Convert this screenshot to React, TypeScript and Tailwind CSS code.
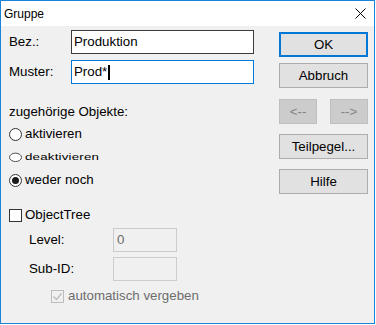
import React from 'react';

const font = { fontFamily: '"Liberation Sans", Arial, sans-serif' };

const Btn: React.FC<{ label: string; className?: string; def?: boolean; disabled?: boolean }> = ({ label, className = '', def, disabled }) => (
    <div
        className={
            'flex items-center justify-center h-[25px] text-[13.3px] leading-none ' +
            (def
                ? 'border-2 border-[#0078d7] bg-[#e1e1e1] text-black '
                : disabled
                ? 'border border-[#bfbfbf] bg-[#cccccc] text-[#838383] '
                : 'border border-[#adadad] bg-[#e1e1e1] text-black ') +
            className
        }
    >
        {label}
    </div>
);

const Radio: React.FC<{ checked?: boolean }> = ({ checked }) => (
    <span className="w-[13px] h-[13px] rounded-full border border-[#333333] bg-white flex items-center justify-center shrink-0">
        {checked && <span className="w-[7px] h-[7px] rounded-full bg-[#1a1a1a]" />}
    </span>
);

export default function App() {
    return (
        <div className="w-[376px] h-[325px] bg-white" style={font}>
            <div className="w-[375px] h-[324px] border border-[#1883d7] flex flex-col">
                {/* title bar */}
                <div className="h-[25px] bg-white flex items-center justify-between pl-[3px] pr-[8px] shrink-0">
                    <span className="text-[12px] text-black leading-none">Gruppe</span>
                    <svg width="11" height="11" viewBox="0 0 11 11" className="mb-[1px]">
                        <path d="M0.5 0.5 L10.5 10.5 M10.5 0.5 L0.5 10.5" stroke="#000" strokeWidth="1" />
                    </svg>
                </div>

                <div className="flex-1 bg-[#f0f0f0] flex text-[13.3px] text-black leading-none">
                    {/* left column */}
                    <div className="flex-1 pl-[8px] pt-[4px]">
                        <div className="flex items-center h-[24px]">
                            <span className="w-[62px]">Bez.:</span>
                            <div className="w-[183px] h-[24px] border border-[#3c3c3c] bg-white flex items-center pl-[2px]">
                                Produktion
                            </div>
                        </div>
                        <div className="flex items-center h-[24px] mt-[6px]">
                            <span className="w-[62px]">Muster:</span>
                            <div className="w-[183px] h-[24px] border border-[#0078d7] bg-white flex items-center pl-[2px]">
                                Prod*
                                <span className="w-[2px] h-[15px] bg-black ml-[1px]" />
                            </div>
                        </div>
                        <div className="h-[16px] mt-[20px] flex items-center">zugehörige Objekte:</div>
                        <div className="h-[16px] mt-[6px] flex items-center gap-[3px]">
                            <Radio />
                            <span>aktivieren</span>
                        </div>
                        <div className="h-[16px] mt-[7px] flex items-center gap-[3px] scale-y-[0.7] origin-center">
                            <Radio />
                            <span className="tracking-[0.2px]">deaktivieren</span>
                        </div>
                        <div className="h-[16px] mt-[7px] flex items-center gap-[3px]">
                            <Radio checked />
                            <span>weder noch</span>
                        </div>
                        <div className="h-[16px] mt-[19px] flex items-center gap-[3px]">
                            <span className="w-[13px] h-[13px] border border-[#333333] bg-white shrink-0" />
                            <span>ObjectTree</span>
                        </div>
                        <div className="flex items-center h-[24px] mt-[5px] pl-[20px]">
                            <span className="w-[84px]">Level:</span>
                            <div className="w-[64px] h-[24px] border border-[#cccccc] bg-[#f0f0f0] flex items-center pl-[3px] text-[#6d6d6d]">
                                0
                            </div>
                        </div>
                        <div className="flex items-center h-[24px] mt-[5px] pl-[20px]">
                            <span className="w-[84px]">Sub-ID:</span>
                            <div className="w-[64px] h-[24px] border border-[#cccccc] bg-[#f0f0f0]" />
                        </div>
                        <div className="h-[16px] mt-[7px] flex items-center gap-[4px] pl-[42px]">
                            <span className="w-[13px] h-[13px] border border-[#bcbcbc] bg-[#f0f0f0] shrink-0 flex items-center justify-center">
                                <svg width="11" height="11" viewBox="0 0 11 11">
                                    <path d="M1.5 5.5 L4.5 8.5 L9.5 2.5" stroke="#bcbcbc" strokeWidth="1.3" fill="none" />
                                </svg>
                            </span>
                            <span className="text-[#6d6d6d]">automatisch vergeben</span>
                        </div>
                    </div>

                    {/* right column */}
                    <div className="w-[89px] mr-[6px] pt-[6px] flex flex-col">
                        <Btn label="OK" def />
                        <Btn label="Abbruch" className="mt-[6px]" />
                        <div className="flex justify-between mt-[11px]">
                            <Btn label="<--" disabled className="w-[38px]" />
                            <Btn label="-->" disabled className="w-[38px]" />
                        </div>
                        <Btn label="Teilpegel..." className="mt-[10px]" />
                        <Btn label="Hilfe" className="mt-[10px]" />
                    </div>
                </div>
            </div>
        </div>
    );
}
